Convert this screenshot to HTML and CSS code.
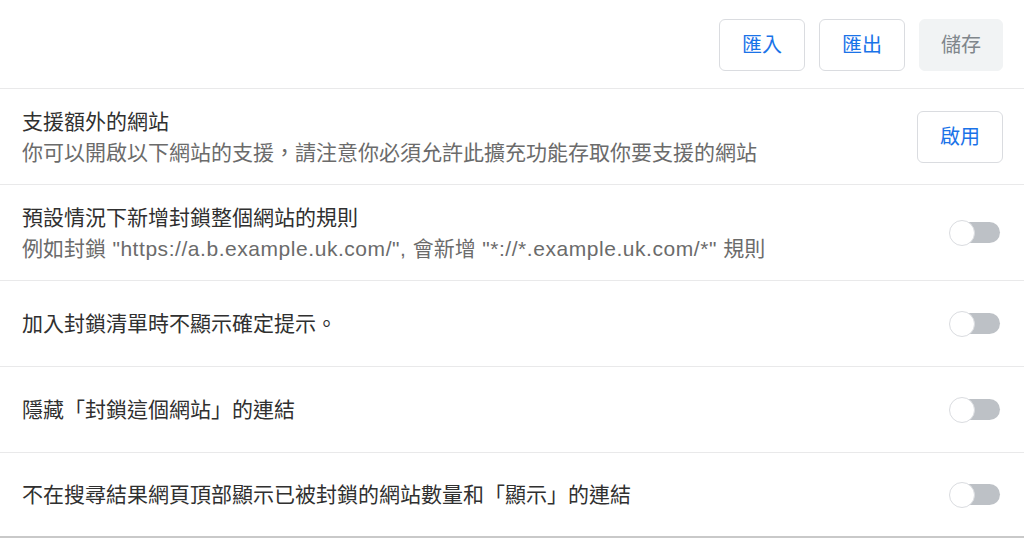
FILE: index.html
```html
<!DOCTYPE html>
<html lang="zh-Hant">
<head>
<meta charset="utf-8">
<title>設定</title>
<link rel="stylesheet" href="styles.css">
</head>
<body>
<div class="page">
  <header class="toolbar">
    <button class="btn">匯入</button>
    <button class="btn">匯出</button>
    <button class="btn btn-disabled">儲存</button>
  </header>
  <section class="row row-two">
    <div class="text">
      <div class="title">支援額外的網站</div>
      <div class="sub">你可以開啟以下網站的支援，請注意你必須允許此擴充功能存取你要支援的網站</div>
    </div>
    <button class="btn">啟用</button>
  </section>
  <section class="row row-two">
    <div class="text">
      <div class="title">預設情況下新增封鎖整個網站的規則</div>
      <div class="sub">例如封鎖<span class="latin"> "https://a.b.example.uk.com/", </span>會新增<span class="latin"> "*://*.example.uk.com/*" </span>規則</div>
    </div>
    <div class="toggle"><span class="track"></span><span class="knob"></span></div>
  </section>
  <section class="row">
    <div class="text"><div class="title">加入封鎖清單時不顯示確定提示。</div></div>
    <div class="toggle"><span class="track"></span><span class="knob"></span></div>
  </section>
  <section class="row">
    <div class="text"><div class="title">隱藏「封鎖這個網站」的連結</div></div>
    <div class="toggle"><span class="track"></span><span class="knob"></span></div>
  </section>
  <section class="row row-last">
    <div class="text"><div class="title">不在搜尋結果網頁頂部顯示已被封鎖的網站數量和「顯示」的連結</div></div>
    <div class="toggle"><span class="track"></span><span class="knob"></span></div>
  </section>
</div>
</body>
</html>
```
FILE: styles.css
```css
html, body {
  margin: 0;
  padding: 0;
  background: #ffffff;
}
body {
  font-family: "Liberation Sans", "Noto Sans CJK TC", sans-serif;
  color: #333333;
}
.page {
  display: flex;
  flex-direction: column;
}
.toolbar {
  display: flex;
  justify-content: flex-end;
  gap: 14px;
  height: 89px;
  box-sizing: border-box;
  padding: 19px 21px 0 0;
  border-bottom: 1px solid #e9e9ea;
}
.btn {
  height: 52px;
  box-sizing: border-box;
  padding: 0 22px;
  border: 1px solid #dadce0;
  border-radius: 6px;
  background: #ffffff;
  color: #1a73e8;
  font-family: "Liberation Sans", "Noto Sans CJK TC", sans-serif;
  font-size: 20px;
  line-height: 1;
  cursor: pointer;
}
.btn-disabled {
  border-color: #f1f3f4;
  background: #f1f3f4;
  color: #80868b;
  padding: 0 21px;
}
.row {
  display: flex;
  align-items: center;
  justify-content: space-between;
  box-sizing: border-box;
  height: 86px;
  padding: 0 21px 0 22px;
  border-bottom: 1px solid #e9e9ea;
}
.row-two {
  height: 96px;
}
.row-last {
  height: 85px;
  border-bottom: 2px solid #c9c9c9;
}
.text {
  display: flex;
  flex-direction: column;
}
.title {
  font-size: 21px;
  line-height: 31px;
  color: #303030;
}
.sub {
  font-size: 21px;
  line-height: 31px;
  color: #6b6b6b;
}
.latin {
  letter-spacing: 0.55px;
}
.row-two .btn {
  margin-top: 1px;
}
.toggle {
  position: relative;
  width: 51px;
  height: 26px;
  margin-right: 3px;
  display: flex;
  align-items: center;
  justify-content: flex-end;
}
.track {
  width: 45px;
  height: 21px;
  border-radius: 11px;
  background: #bdc1c6;
}
.knob {
  position: absolute;
  left: 0;
  top: 0;
  width: 24px;
  height: 24px;
  border-radius: 50%;
  background: #ffffff;
  border: 1px solid #dadce0;
}
```
